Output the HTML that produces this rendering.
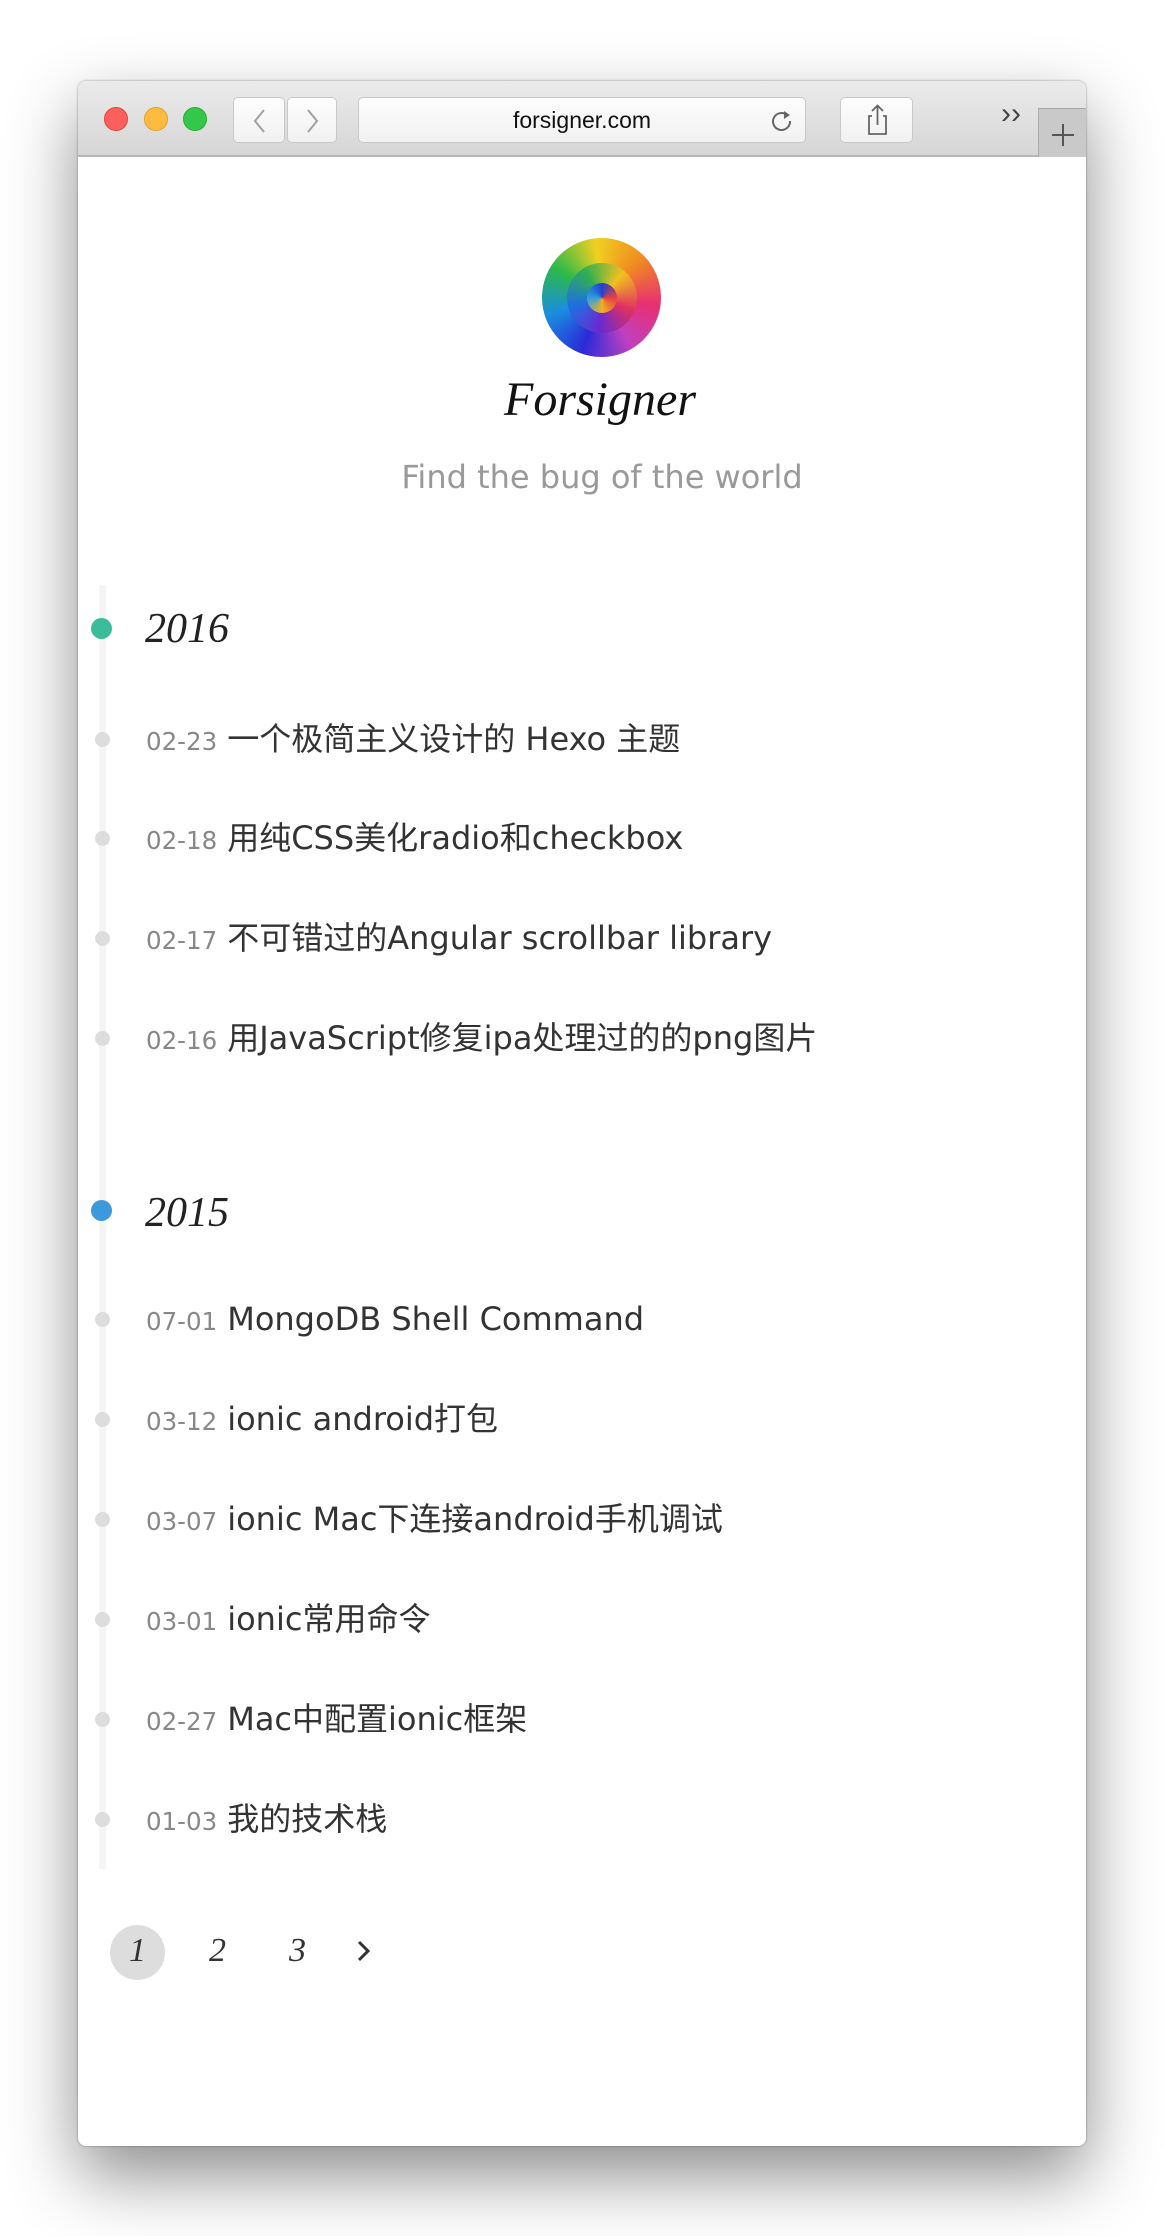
<!DOCTYPE html>
<html><head><meta charset="utf-8"><style>
*{margin:0;padding:0;box-sizing:border-box}
body{width:1164px;height:2236px;background:#fff;position:relative;overflow:hidden;font-family:"DejaVu Sans","Noto Sans CJK SC",sans-serif}
.win{position:absolute;left:78px;top:81px;width:1008px;height:2065px;background:#fff;border-radius:8px;box-shadow:0 30px 70px rgba(0,0,0,.45),0 0 2px rgba(0,0,0,.4);overflow:hidden}
.bar{position:absolute;left:0;top:0;width:100%;height:76px;background:linear-gradient(#ebebeb,#d6d6d6);border-bottom:2px solid #b5b5b5}
.tl{position:absolute;top:26px;width:24px;height:24px;border-radius:50%}
.btn{position:absolute;top:16px;height:46px;background:linear-gradient(#fdfdfd,#f1f1f1);border:1px solid #c8c8c8;border-radius:5px}
.abs{position:absolute}
.line{position:absolute;left:99px;top:585px;width:7px;height:1284px;background:#f5f5f5}
.dot{position:absolute;left:95px;width:15px;height:15px;border-radius:50%;background:#ddd}
.ydot{position:absolute;left:91px;width:21px;height:21px;border-radius:50%}
.year{position:absolute;left:145px;font-family:"Liberation Serif",serif;font-style:italic;font-size:42px;color:#222;line-height:1}
.item{position:absolute;left:146px;white-space:nowrap;line-height:40px}
.d{font-size:24.5px;color:#888;margin-right:10px}
.t{font-size:32px;color:#333}
</style></head><body>
<div class="win">
 <div class="bar">
  <div class="tl" style="left:26px;background:#fc605c;border:1px solid #e0443e"></div>
  <div class="tl" style="left:66px;background:#fdbc40;border:1px solid #dea123"></div>
  <div class="tl" style="left:105px;background:#34c84a;border:1px solid #27aa35"></div>
  <div class="btn" style="left:155px;width:52px"><svg width="52" height="46"><path d="M30 12 L21 23 L30 34" stroke="#a0a0a0" stroke-width="2" fill="none"/></svg></div>
  <div class="btn" style="left:209px;width:50px"><svg width="50" height="46"><path d="M20 12 L29 23 L20 34" stroke="#a0a0a0" stroke-width="2" fill="none"/></svg></div>
  <div class="btn" style="left:280px;width:448px;text-align:center;line-height:44px;font-family:'Liberation Sans',sans-serif;font-size:23px;color:#111">forsigner.com
   <svg class="abs" style="right:10px;top:10px" width="26" height="26"><path d="M18 7 A8.5 8.5 0 1 0 21 13" stroke="#666" stroke-width="2" fill="none"/><path d="M15 3 L21 7 L15 11 Z" fill="#666"/></svg></div>
  <div class="btn" style="left:762px;width:73px"><svg width="73" height="46"><path d="M31 18 H28 V36 H45 V18 H42" stroke="#666" stroke-width="1.8" fill="none"/><path d="M36.5 27 V8 M31 13 L36.5 7.5 L42 13" stroke="#666" stroke-width="1.8" fill="none"/></svg></div>
  <div class="abs" style="left:923px;top:16px;font-size:30px;color:#444;font-family:'Liberation Sans',sans-serif">››</div>
  <div class="abs" style="left:960px;top:27px;width:48px;height:49px;background:#c9c9c9;border-left:1px solid #aaa;border-top:1px solid #aaa"><svg width="48" height="49"><path d="M24 15 V37 M13 26 H35" stroke="#555" stroke-width="2"/></svg></div>
 </div>
</div>
<div class="abs" style="left:542px;top:238px;width:119px;height:119px;border-radius:50%;background:conic-gradient(from 200deg,#2a2ad8,#1a8de0,#2cb94a,#f0d020,#f08a20,#e83070,#c040c0,#2a2ad8);overflow:hidden">
 <div class="abs" style="left:25px;top:25px;width:70px;height:70px;border-radius:50%;background:conic-gradient(from 40deg,#f2c020,#e03060,#6a2ad0,#1f70e0,#2fb050,#f2c020)"></div>
 <div class="abs" style="left:45px;top:45px;width:30px;height:30px;border-radius:50%;background:conic-gradient(#1f3fd0,#e84040,#f0b020,#30a0e0,#1f3fd0)"></div>
</div>
<div class="abs" style="left:0;width:1200px;top:372px;text-align:center;font-family:'Liberation Serif',serif;font-style:italic;font-size:48px;color:#111">Forsigner</div>
<div class="abs" style="left:0;width:1204px;top:458px;text-align:center;font-size:32px;color:#999">Find the bug of the world</div>
<div class="line"></div>
<div class="ydot" style="top:618px;background:#3bbd9b"></div>
<div class="year" style="top:608px">2016</div>
<div class="dot" style="top:732px"></div><div class="item" style="top:719px"><span class="d">02-23</span><span class="t">一个极简主义设计的 Hexo 主题</span></div>
<div class="dot" style="top:831px"></div><div class="item" style="top:818px"><span class="d">02-18</span><span class="t">用纯CSS美化radio和checkbox</span></div>
<div class="dot" style="top:931px"></div><div class="item" style="top:918px"><span class="d">02-17</span><span class="t">不可错过的Angular scrollbar library</span></div>
<div class="dot" style="top:1031px"></div><div class="item" style="top:1018px"><span class="d">02-16</span><span class="t">用JavaScript修复ipa处理过的的png图片</span></div>
<div class="ydot" style="top:1200px;background:#3b99dc"></div>
<div class="year" style="top:1192px">2015</div>
<div class="dot" style="top:1312px"></div><div class="item" style="top:1299px"><span class="d">07-01</span><span class="t">MongoDB Shell Command</span></div>
<div class="dot" style="top:1412px"></div><div class="item" style="top:1399px"><span class="d">03-12</span><span class="t">ionic android打包</span></div>
<div class="dot" style="top:1512px"></div><div class="item" style="top:1499px"><span class="d">03-07</span><span class="t">ionic Mac下连接android手机调试</span></div>
<div class="dot" style="top:1612px"></div><div class="item" style="top:1599px"><span class="d">03-01</span><span class="t">ionic常用命令</span></div>
<div class="dot" style="top:1712px"></div><div class="item" style="top:1699px"><span class="d">02-27</span><span class="t">Mac中配置ionic框架</span></div>
<div class="dot" style="top:1812px"></div><div class="item" style="top:1799px"><span class="d">01-03</span><span class="t">我的技术栈</span></div>
<div class="abs" style="left:110px;top:1925px;width:55px;height:55px;border-radius:50%;background:#ddd"></div>
<div class="abs" style="left:110px;top:1932px;width:55px;text-align:center;font-family:'Liberation Serif',serif;font-style:italic;font-size:34px;color:#333">1</div>
<div class="abs" style="left:190px;top:1932px;width:55px;text-align:center;font-family:'Liberation Serif',serif;font-style:italic;font-size:34px;color:#333">2</div>
<div class="abs" style="left:270px;top:1932px;width:55px;text-align:center;font-family:'Liberation Serif',serif;font-style:italic;font-size:34px;color:#333">3</div>
<svg class="abs" style="left:354px;top:1938px" width="20" height="26"><path d="M5 4 L14 13 L5 22" stroke="#333" stroke-width="3" fill="none"/></svg>
</body></html>
